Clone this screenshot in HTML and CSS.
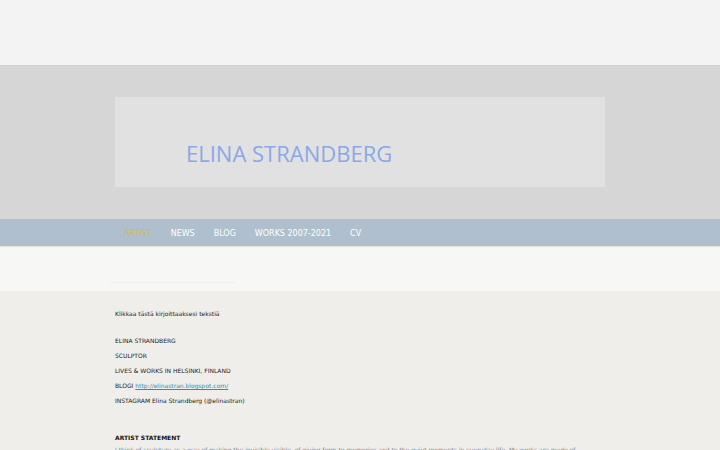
FILE: index.html
```html
<!DOCTYPE html>
<html lang="fi">
<head>
<meta charset="utf-8">
<title>Elina Strandberg</title>
<link rel="stylesheet" href="styles.css">
</head>
<body>
<div class="topbar"></div>
<header class="banner">
  <div class="banner-box">
    <h1 class="site-title">ELINA STRANDBERG</h1>
  </div>
</header>
<nav class="menu">
  <a class="menu-item active" href="#">ARTIST</a>
  <a class="menu-item" href="#">NEWS</a>
  <a class="menu-item" href="#">BLOG</a>
  <a class="menu-item" href="#">WORKS 2007-2021</a>
  <a class="menu-item" href="#">CV</a>
</nav>
<div class="subbar"><div class="subline"></div></div>
<main class="content">
  <p class="line">Klikkaa tästä kirjoittaaksesi tekstiä</p>
  <div class="info">
    <p class="line">ELINA STRANDBERG</p>
    <p class="line">SCULPTOR</p>
    <p class="line">LIVES &amp; WORKS IN HELSINKI, FINLAND</p>
    <p class="line">BLOGI <a class="link" href="#">http://elinastran.blogspot.com/</a></p>
    <p class="line">INSTAGRAM Elina Strandberg (@elinastran)</p>
  </div>
  <h2 class="heading">ARTIST STATEMENT</h2>
  <p class="statement">I think of sculpture as a way of making the invisible visible, of giving form to memories and to the quiet moments in everyday life. My works are made of wood, plaster and found materials.</p>
</main>
</body>
</html>
```
FILE: styles.css
```css
html, body {
  margin: 0;
  padding: 0;
}
body {
  background: #efeeea;
  font-family: "DejaVu Sans", sans-serif;
}
.topbar {
  height: 65px;
  background: #f3f3f3;
}
.banner {
  background: #d6d6d6;
  border-top: 1px solid #d0d0d0;
  padding: 31px 115px 32px;
}
.banner-box {
  height: 90px;
  background: #e1e1e1;
  display: flex;
  align-items: flex-end;
  padding-left: 71px;
  box-sizing: border-box;
}
.site-title {
  margin: 0 0 19px;
  font-family: "Open Sans", sans-serif;
  font-weight: 400;
  font-size: 22px;
  line-height: 30px;
  color: #8aa8e6;
}
.menu {
  height: 28px;
  box-sizing: border-box;
  background: #afbfcd;
  display: flex;
  align-items: center;
  padding: 3px 0 0 114.5px;
  border-bottom: 1px solid #e6e4d6;
}
.menu-item {
  font-size: 8px;
  color: #ffffff;
  text-decoration: none;
  padding: 0 9.5px;
  line-height: 20px;
}
.menu-item.active {
  color: #d6b84e;
}
.subbar {
  height: 44px;
  background: #f7f7f5;
  position: relative;
  border-bottom: 1px solid #f0efe9;
}
.subline {
  position: absolute;
  left: 110px;
  top: 35px;
  width: 125px;
  height: 1px;
  background: #efefeb;
}
.content {
  padding: 14px 115px 0;
  color: #222;
}
.line {
  margin: 0;
  font-size: 6px;
  line-height: 15px;
}
.info {
  margin-top: 12px;
}
.link {
  color: #2b8fb8;
  text-decoration: underline;
}
.heading {
  margin: 22px 0 0;
  font-size: 6px;
  font-weight: bold;
  line-height: 15px;
  color: #111;
}
.statement {
  margin: 0;
  font-size: 6px;
  line-height: 9px;
  color: #888;
  max-width: 470px;
}
```
